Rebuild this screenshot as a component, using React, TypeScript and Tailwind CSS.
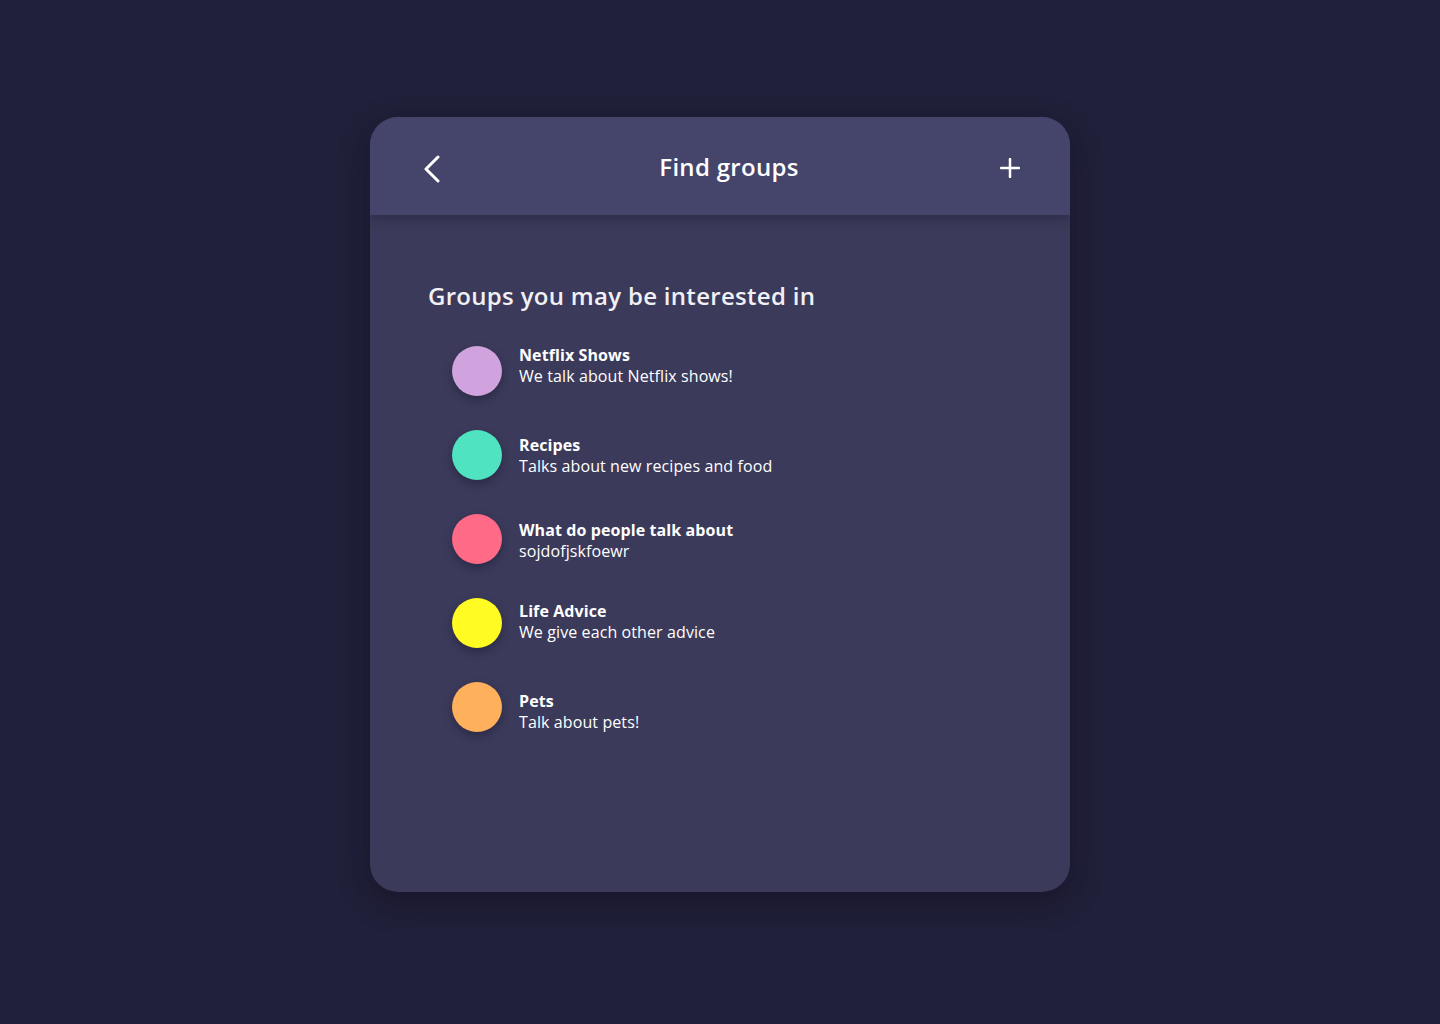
import React from "react";

const groups = [
  { id: 1, name: "Netflix Shows", desc: "We talk about Netflix shows!", color: "bg-[#d0a2de]", offset: "-mt-[1px]" },
  { id: 2, name: "Recipes", desc: "Talks about new recipes and food", color: "bg-[#4fe3c2]", offset: "mt-[5px]" },
  { id: 3, name: "What do people talk about", desc: "sojdofjskfoewr", color: "bg-[#ff6b86]", offset: "mt-[6px]" },
  { id: 4, name: "Life Advice", desc: "We give each other advice", color: "bg-[#fffb23]", offset: "mt-[3px]" },
  { id: 5, name: "Pets", desc: "Talk about pets!", color: "bg-[#ffb05c]", offset: "mt-[9px]" },
];

export default function App() {
  return (
    <div
      className="min-h-screen w-full bg-[#21203a] flex justify-center pt-[117px]"
      style={{ fontFamily: '"Open Sans", "Noto Sans", sans-serif' }}
    >
      <div className="w-[700px] h-[775px] rounded-[28px] bg-[#3b3a5a] overflow-hidden shadow-[0_10px_30px_rgba(10,10,25,0.45)] flex flex-col">
        <div className="h-[98px] shrink-0 bg-[#45446a] flex items-center justify-between pl-[50px] pr-[50px] pt-[4px] shadow-[0_4px_10px_rgba(20,20,40,0.35)] relative z-10">
          <svg width="24" height="30" viewBox="0 0 24 30" fill="none">
            <path d="M18 4 L6 16 L18 28" stroke="white" strokeWidth="3" strokeLinecap="round" strokeLinejoin="round" />
          </svg>
          <h1 className="text-[24px] font-semibold text-white ml-[14px] pb-[2px] tracking-[0.3px]">Find groups</h1>
          <svg width="20" height="20" viewBox="0 0 20 20" fill="none">
            <path d="M10 1 V19 M1 10 H19" stroke="white" strokeWidth="2.5" strokeLinecap="round" />
          </svg>
        </div>
        <div className="pl-[58px] pt-[65px]">
          <h2 className="text-[24px] font-semibold text-[#f1f0f5] leading-[32px] tracking-[0.3px]">
            Groups you may be interested in
          </h2>
          <div className="mt-[34px] pl-[24px] flex flex-col gap-[34px]">
            {groups.map((g) => (
              <div key={g.id} className="flex items-start gap-[17px] h-[50px]">
                <div className={`w-[50px] h-[50px] shrink-0 rounded-full ${g.color} shadow-[0_4px_8px_rgba(15,15,35,0.35)]`} />
                <div className={`flex flex-col text-white text-[16px] leading-[21px] tracking-[0.1px] ${g.offset}`}>
                  <span className="font-bold">{g.name}</span>
                  <span className="font-normal">{g.desc}</span>
                </div>
              </div>
            ))}
          </div>
        </div>
      </div>
    </div>
  );
}
